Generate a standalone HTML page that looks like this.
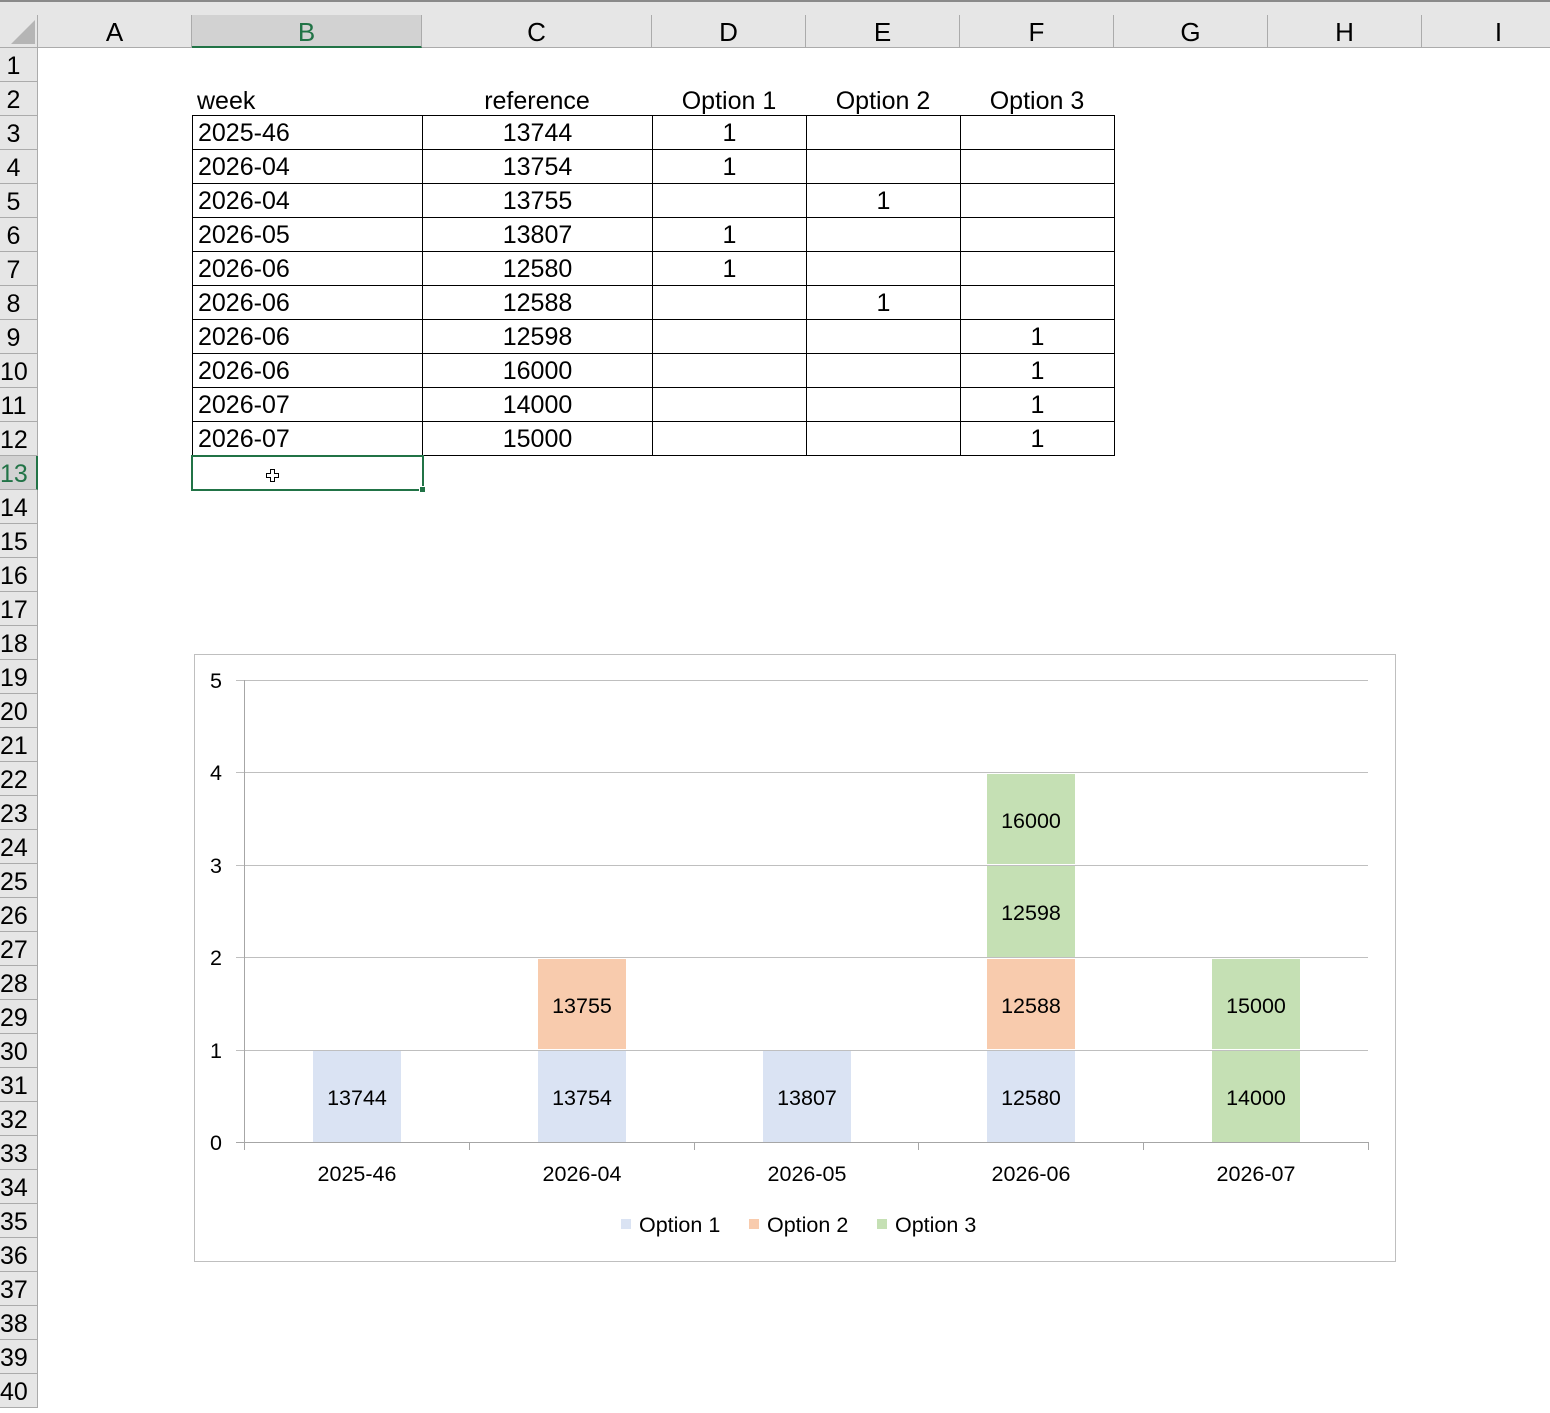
<!DOCTYPE html>
<html><head><meta charset="utf-8"><style>
*{margin:0;padding:0;box-sizing:border-box}
body{width:1550px;height:1413px;background:#fff;position:relative;overflow:hidden;font-family:"Liberation Sans",Arial,sans-serif;color:#000}
.hdrbar{position:absolute;left:0;top:0;width:1550px;height:48px;background:#e6e6e6;border-top:2px solid #8a8a8a;border-bottom:1px solid #ababab}
.ch{position:absolute;top:15px;height:32px;border-right:1px solid #ababab;font-size:26px;text-align:center;line-height:34px}
.rh{position:absolute;left:0;width:38px;height:34px;background:#e6e6e6;border-bottom:1px solid #ababab;border-right:1px solid #ababab;font-size:25px;line-height:36px;overflow:hidden;white-space:nowrap}
.rh span{display:block;width:27px;text-align:center}
.c{position:absolute;font-size:25px;line-height:34px;height:34px;white-space:nowrap}
.t{position:absolute;height:35px;border:1px solid #000;font-size:25px;line-height:34px;padding:0 5px;white-space:nowrap}
.n{text-align:center}
</style></head><body>
<div class="hdrbar"></div>
<div style="position:absolute;left:0;top:15px;width:38px;height:32px;border-right:1px solid #ababab"></div>
<svg style="position:absolute;left:10px;top:19px" width="26" height="26"><polygon points="25,1 25,25 1,25" fill="#b5b5b5"/></svg>
<div class="ch" style="left:38px;width:154px">A</div>
<div class="ch" style="left:192px;width:230px;background:#d2d2d2;color:#217346;border-bottom:2px solid #217346;height:33px">B</div>
<div class="ch" style="left:422px;width:230px">C</div>
<div class="ch" style="left:652px;width:154px">D</div>
<div class="ch" style="left:806px;width:154px">E</div>
<div class="ch" style="left:960px;width:154px">F</div>
<div class="ch" style="left:1114px;width:154px">G</div>
<div class="ch" style="left:1268px;width:154px">H</div>
<div class="ch" style="left:1422px;width:154px">I</div>

<div class="rh" style="top:48px"><span>1</span></div><div class="rh" style="top:82px"><span>2</span></div><div class="rh" style="top:116px"><span>3</span></div><div class="rh" style="top:150px"><span>4</span></div><div class="rh" style="top:184px"><span>5</span></div><div class="rh" style="top:218px"><span>6</span></div><div class="rh" style="top:252px"><span>7</span></div><div class="rh" style="top:286px"><span>8</span></div><div class="rh" style="top:320px"><span>9</span></div><div class="rh" style="top:354px"><span>10</span></div><div class="rh" style="top:388px"><span>11</span></div><div class="rh" style="top:422px"><span>12</span></div><div class="rh" style="top:456px;background:#d2d2d2;color:#217346;border-right:2px solid #217346"><span>13</span></div><div class="rh" style="top:490px"><span>14</span></div><div class="rh" style="top:524px"><span>15</span></div><div class="rh" style="top:558px"><span>16</span></div><div class="rh" style="top:592px"><span>17</span></div><div class="rh" style="top:626px"><span>18</span></div><div class="rh" style="top:660px"><span>19</span></div><div class="rh" style="top:694px"><span>20</span></div><div class="rh" style="top:728px"><span>21</span></div><div class="rh" style="top:762px"><span>22</span></div><div class="rh" style="top:796px"><span>23</span></div><div class="rh" style="top:830px"><span>24</span></div><div class="rh" style="top:864px"><span>25</span></div><div class="rh" style="top:898px"><span>26</span></div><div class="rh" style="top:932px"><span>27</span></div><div class="rh" style="top:966px"><span>28</span></div><div class="rh" style="top:1000px"><span>29</span></div><div class="rh" style="top:1034px"><span>30</span></div><div class="rh" style="top:1068px"><span>31</span></div><div class="rh" style="top:1102px"><span>32</span></div><div class="rh" style="top:1136px"><span>33</span></div><div class="rh" style="top:1170px"><span>34</span></div><div class="rh" style="top:1204px"><span>35</span></div><div class="rh" style="top:1238px"><span>36</span></div><div class="rh" style="top:1272px"><span>37</span></div><div class="rh" style="top:1306px"><span>38</span></div><div class="rh" style="top:1340px"><span>39</span></div><div class="rh" style="top:1374px"><span>40</span></div>

<div class="c" style="left:197px;top:84px">week</div>
<div class="c" style="left:422px;width:230px;text-align:center;top:84px">reference</div>
<div class="c" style="left:652px;width:154px;text-align:center;top:84px">Option 1</div>
<div class="c" style="left:806px;width:154px;text-align:center;top:84px">Option 2</div>
<div class="c" style="left:960px;width:154px;text-align:center;top:84px">Option 3</div>

<div class="t" style="left:192px;top:115px;width:231px">2025-46</div><div class="t n" style="left:422px;top:115px;width:231px">13744</div><div class="t n" style="left:652px;top:115px;width:155px">1</div><div class="t" style="left:806px;top:115px;width:155px"></div><div class="t" style="left:960px;top:115px;width:155px"></div>
<div class="t" style="left:192px;top:149px;width:231px">2026-04</div><div class="t n" style="left:422px;top:149px;width:231px">13754</div><div class="t n" style="left:652px;top:149px;width:155px">1</div><div class="t" style="left:806px;top:149px;width:155px"></div><div class="t" style="left:960px;top:149px;width:155px"></div>
<div class="t" style="left:192px;top:183px;width:231px">2026-04</div><div class="t n" style="left:422px;top:183px;width:231px">13755</div><div class="t" style="left:652px;top:183px;width:155px"></div><div class="t n" style="left:806px;top:183px;width:155px">1</div><div class="t" style="left:960px;top:183px;width:155px"></div>
<div class="t" style="left:192px;top:217px;width:231px">2026-05</div><div class="t n" style="left:422px;top:217px;width:231px">13807</div><div class="t n" style="left:652px;top:217px;width:155px">1</div><div class="t" style="left:806px;top:217px;width:155px"></div><div class="t" style="left:960px;top:217px;width:155px"></div>
<div class="t" style="left:192px;top:251px;width:231px">2026-06</div><div class="t n" style="left:422px;top:251px;width:231px">12580</div><div class="t n" style="left:652px;top:251px;width:155px">1</div><div class="t" style="left:806px;top:251px;width:155px"></div><div class="t" style="left:960px;top:251px;width:155px"></div>
<div class="t" style="left:192px;top:285px;width:231px">2026-06</div><div class="t n" style="left:422px;top:285px;width:231px">12588</div><div class="t" style="left:652px;top:285px;width:155px"></div><div class="t n" style="left:806px;top:285px;width:155px">1</div><div class="t" style="left:960px;top:285px;width:155px"></div>
<div class="t" style="left:192px;top:319px;width:231px">2026-06</div><div class="t n" style="left:422px;top:319px;width:231px">12598</div><div class="t" style="left:652px;top:319px;width:155px"></div><div class="t" style="left:806px;top:319px;width:155px"></div><div class="t n" style="left:960px;top:319px;width:155px">1</div>
<div class="t" style="left:192px;top:353px;width:231px">2026-06</div><div class="t n" style="left:422px;top:353px;width:231px">16000</div><div class="t" style="left:652px;top:353px;width:155px"></div><div class="t" style="left:806px;top:353px;width:155px"></div><div class="t n" style="left:960px;top:353px;width:155px">1</div>
<div class="t" style="left:192px;top:387px;width:231px">2026-07</div><div class="t n" style="left:422px;top:387px;width:231px">14000</div><div class="t" style="left:652px;top:387px;width:155px"></div><div class="t" style="left:806px;top:387px;width:155px"></div><div class="t n" style="left:960px;top:387px;width:155px">1</div>
<div class="t" style="left:192px;top:421px;width:231px">2026-07</div><div class="t n" style="left:422px;top:421px;width:231px">15000</div><div class="t" style="left:652px;top:421px;width:155px"></div><div class="t" style="left:806px;top:421px;width:155px"></div><div class="t n" style="left:960px;top:421px;width:155px">1</div>

<div style="position:absolute;left:191px;top:455px;width:233px;height:36px;border:2px solid #217346"></div>
<div style="position:absolute;left:419px;top:486px;width:7px;height:7px;background:#217346;border:1px solid #fff"></div>
<svg style="position:absolute;left:265px;top:468px" width="16" height="16"><path d="M5.5 1.5h4v4h4v4h-4v4h-4v-4h-4v-4h4z" fill="#fff" stroke="#000" stroke-width="1"/></svg>

<svg style="position:absolute;left:0;top:0" width="1550" height="1413" font-family="Liberation Sans, sans-serif" font-size="21.5">
<rect x="194.5" y="654.5" width="1201" height="607" fill="#fff" stroke="#bfbfbf"/>
<g stroke="#bfbfbf" stroke-width="1">
<line x1="236" y1="680.5" x2="1368" y2="680.5"/>
<line x1="236" y1="772.5" x2="1368" y2="772.5"/>
<line x1="236" y1="865.5" x2="1368" y2="865.5"/>
<line x1="236" y1="957.5" x2="1368" y2="957.5"/>
<line x1="236" y1="1050.5" x2="1368" y2="1050.5"/>
</g>
<g stroke="#a6a6a6" stroke-width="1">
<line x1="236" y1="1142.5" x2="1369" y2="1142.5"/>
<line x1="244.5" y1="680" x2="244.5" y2="1142"/>
<line x1="244.5" y1="1142" x2="244.5" y2="1150"/>
<line x1="469.5" y1="1142" x2="469.5" y2="1150"/>
<line x1="694.5" y1="1142" x2="694.5" y2="1150"/>
<line x1="918.5" y1="1142" x2="918.5" y2="1150"/>
<line x1="1143.5" y1="1142" x2="1143.5" y2="1150"/>
<line x1="1368.5" y1="1142" x2="1368.5" y2="1150"/>
</g>
<g text-anchor="end" fill="#000">
<text x="222" y="688">5</text><text x="222" y="780">4</text><text x="222" y="873">3</text><text x="222" y="965">2</text><text x="222" y="1058">1</text><text x="222" y="1150">0</text>
</g>
<g>
<rect x="313" y="1051" width="88" height="91" fill="#dae3f3"/>
<rect x="538" y="1051" width="88" height="91" fill="#dae3f3"/>
<rect x="538" y="959" width="88" height="90" fill="#f8cbad"/>
<rect x="763" y="1051" width="88" height="91" fill="#dae3f3"/>
<rect x="987" y="1051" width="88" height="91" fill="#dae3f3"/>
<rect x="987" y="959" width="88" height="90" fill="#f8cbad"/>
<rect x="987" y="866" width="88" height="91" fill="#c5e0b4"/>
<rect x="987" y="774" width="88" height="90" fill="#c5e0b4"/>
<rect x="1212" y="1051" width="88" height="91" fill="#c5e0b4"/>
<rect x="1212" y="959" width="88" height="90" fill="#c5e0b4"/>
</g>
<g text-anchor="middle" fill="#000">
<text x="357" y="1105">13744</text>
<text x="582" y="1105">13754</text><text x="582" y="1013">13755</text>
<text x="807" y="1105">13807</text>
<text x="1031" y="1105">12580</text><text x="1031" y="1013">12588</text><text x="1031" y="920">12598</text><text x="1031" y="828">16000</text>
<text x="1256" y="1105">14000</text><text x="1256" y="1013">15000</text>
<text x="357" y="1181">2025-46</text><text x="582" y="1181">2026-04</text><text x="807" y="1181">2026-05</text><text x="1031" y="1181">2026-06</text><text x="1256" y="1181">2026-07</text>
</g>
<rect x="621" y="1219" width="10" height="10" fill="#dae3f3"/>
<text x="639" y="1232">Option 1</text>
<rect x="749" y="1219" width="10" height="10" fill="#f8cbad"/>
<text x="767" y="1232">Option 2</text>
<rect x="877" y="1219" width="10" height="10" fill="#c5e0b4"/>
<text x="895" y="1232">Option 3</text>
</svg>
</body></html>
